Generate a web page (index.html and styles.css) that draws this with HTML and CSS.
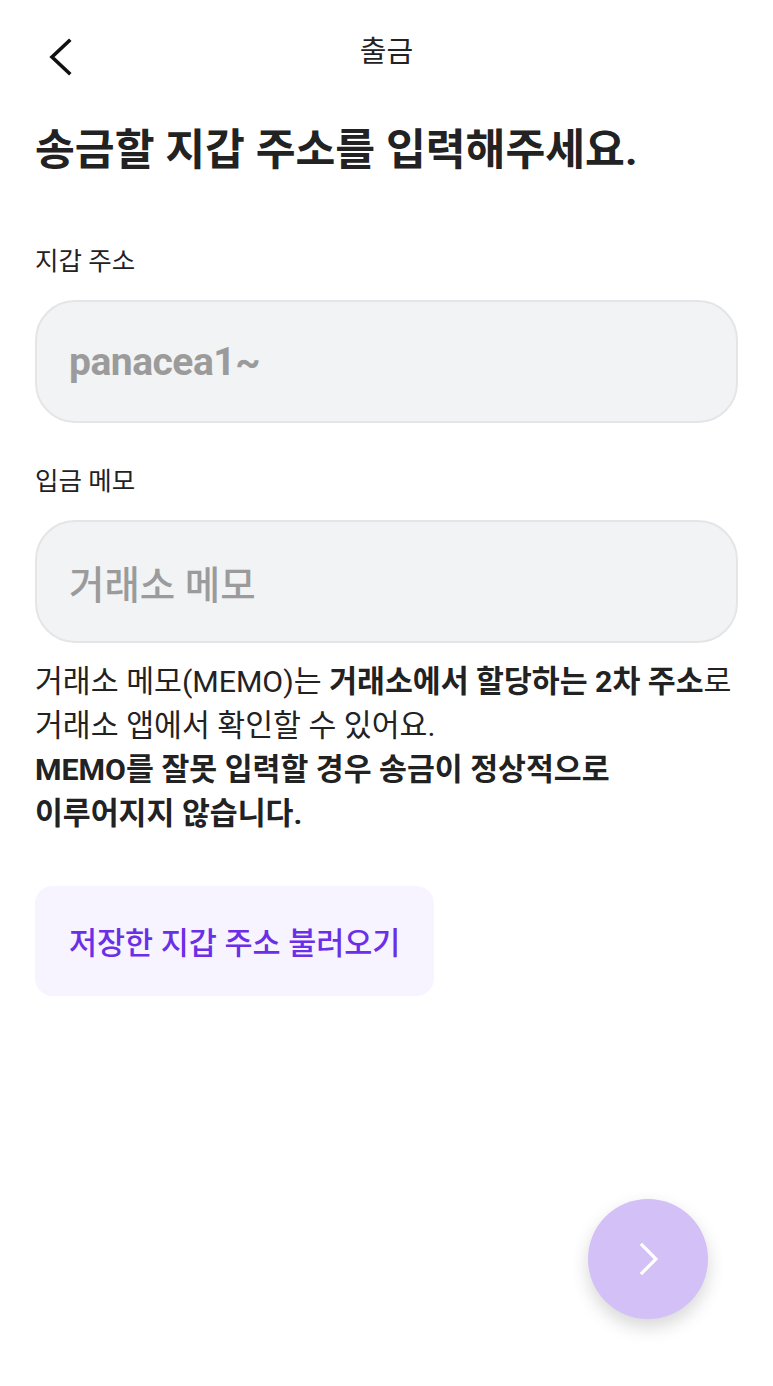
FILE: index.html
```html
<!DOCTYPE html>
<html lang="ko">
<head>
<meta charset="utf-8">
<title>출금</title>
<link rel="stylesheet" href="styles.css">
</head>
<body>
<div class="screen">
  <header class="topbar">
    <button class="back" aria-label="뒤로">
      <svg width="40" height="48" viewBox="0 0 40 48"><polyline points="33,13 16,29 33,45" fill="none" stroke="#111" stroke-width="3.6" stroke-linecap="square"/></svg>
    </button>
    <div class="topbar-title">출금</div>
    <div class="spacer"></div>
  </header>

  <main class="content">
    <h1 class="title">송금할 지갑 주소를 입력해주세요.</h1>

    <div class="field">
      <div class="label">지갑 주소</div>
      <div class="input"><span class="ph ph-bold">panacea1~</span></div>
    </div>

    <div class="field second">
      <div class="label">입금 메모</div>
      <div class="input"><span class="ph">거래소 메모</span></div>
    </div>

    <p class="help">거래소 메모(MEMO)는 <b>거래소에서 할당하는 2차 주소</b>로<br>거래소 앱에서 확인할 수 있어요.<br><b>MEMO를 잘못 입력할 경우 송금이 정상적으로<br>이루어지지 않습니다.</b></p>

    <button class="load-btn">저장한 지갑 주소 불러오기</button>
  </main>

  <button class="fab" aria-label="다음">
    <svg width="40" height="40" viewBox="0 0 40 40"><polyline points="14,6 28,20 14,34" fill="none" stroke="#fff" stroke-width="3.2" stroke-linecap="square"/></svg>
  </button>
</div>
</body>
</html>
```

FILE: styles.css
```css
* { box-sizing: border-box; }
html, body { margin: 0; padding: 0; background: #fff; }
body {
  font-family: Roboto, "Noto Sans CJK KR", sans-serif;
  color: #222;
}
.screen {
  position: relative;
  width: 773px;
  height: 1386px;
  overflow: hidden;
}
.topbar {
  height: 104px;
  display: grid;
  grid-template-columns: 1fr auto 1fr;
  align-items: center;
  padding: 0 18px;
}
.back {
  justify-self: start;
  background: none;
  border: 0;
  padding: 0;
  margin-left: 18px;
  width: 40px;
  height: 48px;
  display: flex;
  align-items: center;
  justify-content: center;
  cursor: pointer;
}
.back svg { display: block; }
.topbar-title {
  font-size: 29px;
  font-weight: 400;
  line-height: 34px;
  color: #222;
}
.content {
  padding: 0 35px;
}
.title {
  margin: 19px 0 0;
  font-size: 43.3px;
  line-height: 56px;
  font-weight: 700;
  color: #222;
  letter-spacing: 0;
}
.field { margin-top: 66px; }
.field.second { margin-top: 42px; }
.label {
  font-size: 25.5px;
  line-height: 32px;
  color: #222;
}
.input {
  margin-top: 23px;
  height: 123px;
  border: 2px solid #e4e5e7;
  border-radius: 40px;
  background: #f2f3f5;
  display: flex;
  align-items: center;
  padding: 0 32px;
}
.ph {
  font-size: 38.5px;
  font-weight: 500;
  color: #9b9b9b;
}
.ph-bold {
  font-weight: 700;
  font-size: 39px;
  letter-spacing: -0.5px;
}
.help {
  margin: 17px -30px 0 0;
  font-size: 30.3px;
  line-height: 44px;
  color: #222;
  white-space: nowrap;
}
.help b { font-weight: 700; }
.load-btn {
  margin-top: 50px;
  display: flex;
  align-items: center;
  height: 110px;
  padding: 0 34px;
  border: 0;
  border-radius: 18px;
  background: #f7f3ff;
  color: #6a2fe6;
  font-family: Roboto, "Noto Sans CJK KR", sans-serif;
  font-size: 30.5px;
  font-weight: 500;
  cursor: pointer;
}
.fab {
  position: absolute;
  right: 65px;
  bottom: 67px;
  width: 120px;
  height: 120px;
  border-radius: 50%;
  border: 0;
  background: #d2c0f6;
  box-shadow: 0 8px 18px rgba(0, 0, 0, 0.16);
  display: flex;
  align-items: center;
  justify-content: center;
  padding: 0;
  cursor: pointer;
}
.fab svg { display: block; }
```
